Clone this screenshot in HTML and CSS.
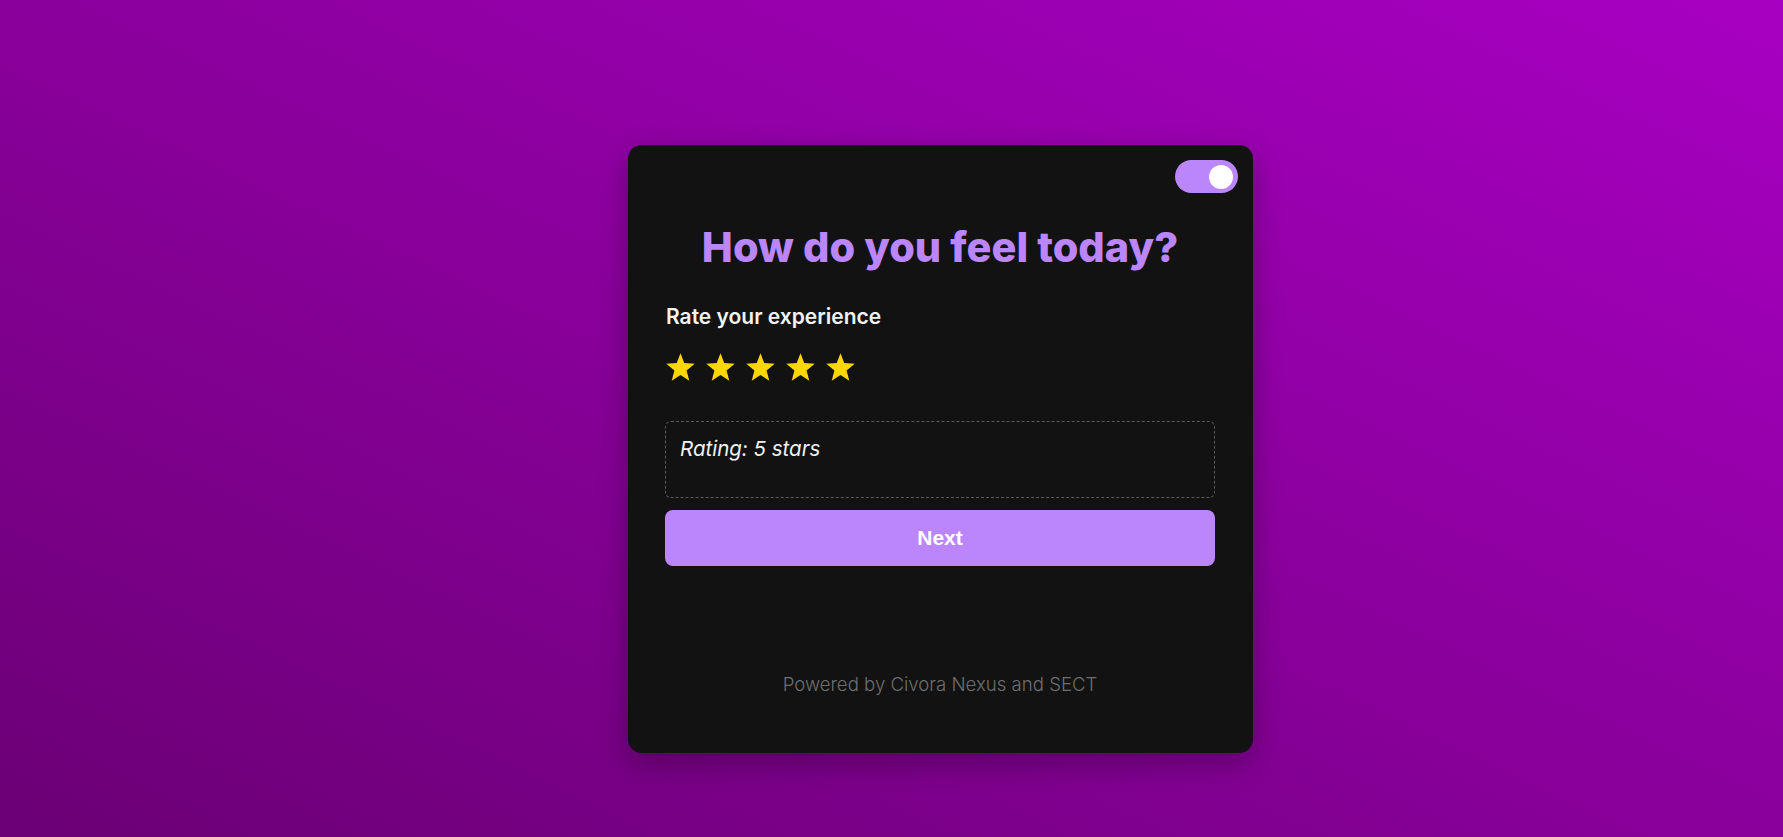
FILE: index.html
```html
<!DOCTYPE html>
<html lang="en">
<head>
<meta charset="utf-8">
<title>How do you feel today?</title>
<link rel="stylesheet" href="styles.css">
</head>
<body>
<main class="page">
  <section class="card">
    <button class="toggle" aria-label="Toggle theme"><span class="knob"></span></button>
    <h1 class="title">How do you feel today?</h1>
    <p class="label">Rate your experience</p>
    <div class="stars">
      <svg class="star" viewBox="0 0 24 24"><polygon points="12,1 14.9,8.6 23,9.1 16.7,14.3 18.8,22.3 12,17.8 5.2,22.3 7.3,14.3 1,9.1 9.1,8.6"/></svg>
      <svg class="star" viewBox="0 0 24 24"><polygon points="12,1 14.9,8.6 23,9.1 16.7,14.3 18.8,22.3 12,17.8 5.2,22.3 7.3,14.3 1,9.1 9.1,8.6"/></svg>
      <svg class="star" viewBox="0 0 24 24"><polygon points="12,1 14.9,8.6 23,9.1 16.7,14.3 18.8,22.3 12,17.8 5.2,22.3 7.3,14.3 1,9.1 9.1,8.6"/></svg>
      <svg class="star" viewBox="0 0 24 24"><polygon points="12,1 14.9,8.6 23,9.1 16.7,14.3 18.8,22.3 12,17.8 5.2,22.3 7.3,14.3 1,9.1 9.1,8.6"/></svg>
      <svg class="star" viewBox="0 0 24 24"><polygon points="12,1 14.9,8.6 23,9.1 16.7,14.3 18.8,22.3 12,17.8 5.2,22.3 7.3,14.3 1,9.1 9.1,8.6"/></svg>
    </div>
    <div class="result">Rating: 5 stars</div>
    <button class="next">Next</button>
    <p class="footer">Powered by Civora Nexus and SECT</p>
  </section>
</main>
</body>
</html>
```

FILE: styles.css
```css
html, body {
  margin: 0;
  padding: 0;
}
body {
  background: linear-gradient(to top right, #6b0075, #a800c2);
  min-height: 100vh;
  font-family: "Inter", "Noto Sans", sans-serif;
}
.page {
  min-height: 100vh;
  box-sizing: border-box;
  display: flex;
  justify-content: center;
  align-items: flex-start;
  padding: 145px 0 0 98px;
}
.card {
  position: relative;
  width: 625px;
  height: 608px;
  box-sizing: border-box;
  padding: 77px 38px 57px 37px;
  background: #121212;
  border-radius: 14px;
  box-shadow: 0 10px 30px rgba(0, 0, 0, 0.3);
  display: flex;
  flex-direction: column;
}
.toggle {
  position: absolute;
  top: 15px;
  right: 15px;
  width: 63px;
  height: 33px;
  border: 0;
  padding: 0 5px 0 0;
  border-radius: 17px;
  background: #bb86fc;
  display: flex;
  align-items: center;
  justify-content: flex-end;
}
.knob {
  width: 24px;
  height: 24px;
  border-radius: 50%;
  background: #ffffff;
}
.title {
  margin: 0;
  text-align: center;
  font-size: 41.5px;
  line-height: 50px;
  font-weight: 800;
  color: #bb86fc;
}
.label {
  margin: 31px 0 0 1px;
  font-size: 21px;
  line-height: 28px;
  font-weight: 600;
  color: #f2f2f2;
}
.stars {
  display: flex;
  gap: 9px;
  margin: 21px 0 0 0;
}
.star {
  width: 31px;
  height: 31px;
  fill: #ffd700;
}
.result {
  margin-top: 38px;
  height: 77px;
  box-sizing: border-box;
  padding: 14px 14px;
  border: 1px dashed #5a5a5a;
  border-radius: 6px;
  font-size: 20.5px;
  line-height: 26px;
  font-style: italic;
  color: #f2f2f2;
}
.next {
  margin-top: 12px;
  height: 56px;
  border: 0;
  border-radius: 8px;
  background: #bb86fc;
  color: #ffffff;
  font-family: "Liberation Sans", Arial, sans-serif;
  font-weight: 700;
  font-size: 21px;
}
.footer {
  margin: auto 0 0 0;
  text-align: center;
  font-size: 18.6px;
  line-height: 24px;
  font-weight: 300;
  color: #6e6e6e;
}
```
